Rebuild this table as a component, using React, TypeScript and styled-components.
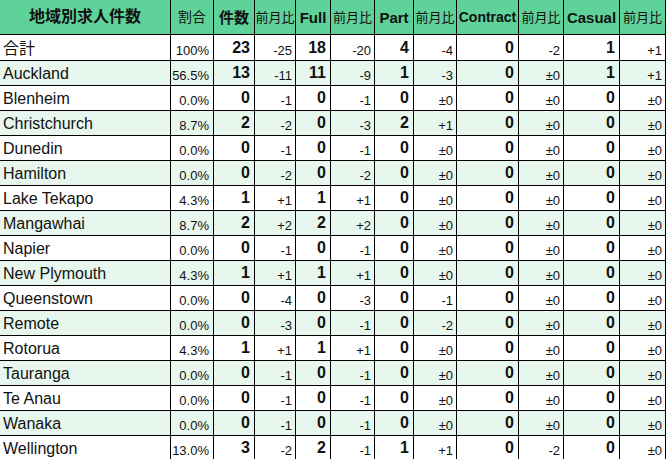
import React from "react";
import styled, { createGlobalStyle } from "styled-components";

const Global = createGlobalStyle`
  html, body {
    margin: 0;
    padding: 0;
    background: #ffffff;
    overflow: hidden;
  }
  body {
    font-family: "Liberation Sans", Arial, "Noto Sans CJK JP", sans-serif;
    color: #111;
  }
`;

const HEADER_BG = "#5fd29a";
const STRIPE_BG = "#e7f7ed";

const Sheet = styled.div`
  display: grid;
  grid-template-columns: 170px 42px 40px 40px 34px 43px 38px 42px 61px 44px 55px 45px;
  grid-template-rows: 34px 25px repeat(16, 24px);
  gap: 1px;
  padding: 1px;
  background: #000;
  width: max-content;
  margin: -1px 0 0 -1px;
`;

const HeaderCell = styled.div<{ $size: number; $bold?: boolean }>`
  background: ${HEADER_BG};
  display: flex;
  align-items: center;
  justify-content: center;
  white-space: nowrap;
  overflow: hidden;
  font-size: ${(p) => p.$size}px;
  font-weight: ${(p) => (p.$bold ? 700 : 400)};
  line-height: 1;
  color: #111;
  font-family: "Liberation Sans", Arial, "Noto Sans CJK JP", sans-serif;
`;

const BodyCell = styled.div<{ $stripe: boolean }>`
  background: ${(p) => (p.$stripe ? STRIPE_BG : "#ffffff")};
  display: flex;
  align-items: flex-end;
  padding-bottom: 4px;
  line-height: 1;
  white-space: nowrap;
  overflow: hidden;
  box-sizing: border-box;
  font-family: "Liberation Sans", Arial, "Noto Sans CJK JP", sans-serif;
  color: #111;
`;

const NameCell = styled(BodyCell)`
  justify-content: flex-start;
  padding-left: 3px;
  padding-bottom: 3px;
  font-size: 16px;
`;

const PercentCell = styled(BodyCell)`
  justify-content: flex-end;
  padding-right: 4px;
  padding-bottom: 3px;
  font-size: 13px;
`;

const CountCell = styled(BodyCell)`
  justify-content: flex-end;
  padding-right: 4px;
  font-size: 16px;
  font-weight: 700;
`;

const DeltaCell = styled(BodyCell)`
  justify-content: flex-end;
  padding-right: 3px;
  padding-bottom: 3px;
  font-size: 13px;
`;

type Row = [string, string, number, string, number, string, number, string, number, string, number, string];

const rows: Row[] = [
  ["合計", "100%", 23, "-25", 18, "-20", 4, "-4", 0, "-2", 1, "+1"],
  ["Auckland", "56.5%", 13, "-11", 11, "-9", 1, "-3", 0, "±0", 1, "+1"],
  ["Blenheim", "0.0%", 0, "-1", 0, "-1", 0, "±0", 0, "±0", 0, "±0"],
  ["Christchurch", "8.7%", 2, "-2", 0, "-3", 2, "+1", 0, "±0", 0, "±0"],
  ["Dunedin", "0.0%", 0, "-1", 0, "-1", 0, "±0", 0, "±0", 0, "±0"],
  ["Hamilton", "0.0%", 0, "-2", 0, "-2", 0, "±0", 0, "±0", 0, "±0"],
  ["Lake Tekapo", "4.3%", 1, "+1", 1, "+1", 0, "±0", 0, "±0", 0, "±0"],
  ["Mangawhai", "8.7%", 2, "+2", 2, "+2", 0, "±0", 0, "±0", 0, "±0"],
  ["Napier", "0.0%", 0, "-1", 0, "-1", 0, "±0", 0, "±0", 0, "±0"],
  ["New Plymouth", "4.3%", 1, "+1", 1, "+1", 0, "±0", 0, "±0", 0, "±0"],
  ["Queenstown", "0.0%", 0, "-4", 0, "-3", 0, "-1", 0, "±0", 0, "±0"],
  ["Remote", "0.0%", 0, "-3", 0, "-1", 0, "-2", 0, "±0", 0, "±0"],
  ["Rotorua", "4.3%", 1, "+1", 1, "+1", 0, "±0", 0, "±0", 0, "±0"],
  ["Tauranga", "0.0%", 0, "-1", 0, "-1", 0, "±0", 0, "±0", 0, "±0"],
  ["Te Anau", "0.0%", 0, "-1", 0, "-1", 0, "±0", 0, "±0", 0, "±0"],
  ["Wanaka", "0.0%", 0, "-1", 0, "-1", 0, "±0", 0, "±0", 0, "±0"],
  ["Wellington", "13.0%", 3, "-2", 2, "-1", 1, "+1", 0, "-2", 0, "±0"],
];

const headers: { label: string; size: number; bold?: boolean }[] = [
  { label: "地域別求人件数", size: 16, bold: true },
  { label: "割合", size: 14 },
  { label: "件数", size: 15, bold: true },
  { label: "前月比", size: 13 },
  { label: "Full", size: 15, bold: true },
  { label: "前月比", size: 13 },
  { label: "Part", size: 15, bold: true },
  { label: "前月比", size: 13 },
  { label: "Contract", size: 14, bold: true },
  { label: "前月比", size: 13 },
  { label: "Casual", size: 15, bold: true },
  { label: "前月比", size: 13 },
];

export default function App() {
  return (
    <>
      <Global />
      <Sheet role="table">
        {headers.map((h, i) => (
          <HeaderCell key={`h${i}`} $size={h.size} $bold={h.bold} role="columnheader">
            {h.label}
          </HeaderCell>
        ))}
        {rows.map((r, ri) => {
          const s = ri % 2 === 1;
          return (
            <React.Fragment key={r[0]}>
              <NameCell $stripe={s}>{r[0]}</NameCell>
              <PercentCell $stripe={s}>{r[1]}</PercentCell>
              <CountCell $stripe={s}>{r[2]}</CountCell>
              <DeltaCell $stripe={s}>{r[3]}</DeltaCell>
              <CountCell $stripe={s}>{r[4]}</CountCell>
              <DeltaCell $stripe={s}>{r[5]}</DeltaCell>
              <CountCell $stripe={s}>{r[6]}</CountCell>
              <DeltaCell $stripe={s}>{r[7]}</DeltaCell>
              <CountCell $stripe={s}>{r[8]}</CountCell>
              <DeltaCell $stripe={s}>{r[9]}</DeltaCell>
              <CountCell $stripe={s}>{r[10]}</CountCell>
              <DeltaCell $stripe={s}>{r[11]}</DeltaCell>
            </React.Fragment>
          );
        })}
      </Sheet>
    </>
  );
}
